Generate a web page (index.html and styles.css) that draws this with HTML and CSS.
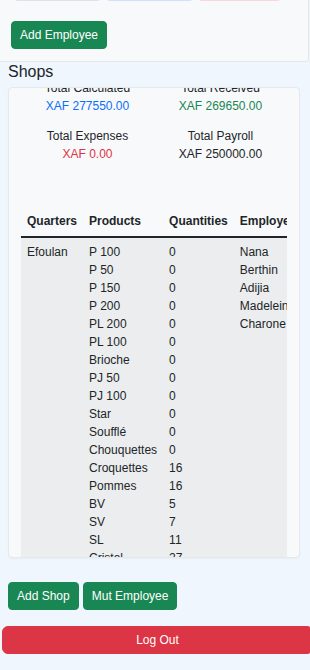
FILE: index.html
```html
<!DOCTYPE html>
<html lang="en">
<head>
<meta charset="utf-8">
<title>Dashboard</title>
<link rel="stylesheet" href="styles.css">
</head>
<body>
  <section class="top-panel">
    <div class="summary-row">
      <div class="summary summary-light"></div>
      <div class="summary summary-blue"></div>
      <div class="summary summary-red"></div>
    </div>
    <button class="btn btn-success btn-add-employee" type="button">Add Employee</button>
  </section>

  <h2 class="section-title">Shops</h2>

  <div class="shop-card">
    <div class="shop-body">
      <div class="stats">
        <div class="stat">
          <div class="stat-label">Total Calculated</div>
          <div class="stat-value text-primary">XAF 277550.00</div>
        </div>
        <div class="stat">
          <div class="stat-label">Total Received</div>
          <div class="stat-value text-success">XAF 269650.00</div>
        </div>
        <div class="stat">
          <div class="stat-label">Total Expenses</div>
          <div class="stat-value text-danger">XAF 0.00</div>
        </div>
        <div class="stat">
          <div class="stat-label">Total Payroll</div>
          <div class="stat-value">XAF 250000.00</div>
        </div>
      </div>

      <div class="table-wrap">
        <table class="shop-table">
          <thead>
            <tr>
              <th>Quarters</th>
              <th>Products</th>
              <th>Quantities</th>
              <th>Employees</th>
              <th>Actions</th>
            </tr>
          </thead>
          <tbody>
            <tr class="striped">
              <td>Efoulan</td>
              <td>
                <div>P 100</div><div>P 50</div><div>P 150</div><div>P 200</div>
                <div>PL 200</div><div>PL 100</div><div>Brioche</div><div>PJ 50</div>
                <div>PJ 100</div><div>Star</div><div>Soufflé</div><div>Chouquettes</div>
                <div>Croquettes</div><div>Pommes</div><div>BV</div><div>SV</div>
                <div>SL</div><div>Cristal</div><div>Cake</div><div>Pizza</div>
              </td>
              <td>
                <div>0</div><div>0</div><div>0</div><div>0</div>
                <div>0</div><div>0</div><div>0</div><div>0</div>
                <div>0</div><div>0</div><div>0</div><div>0</div>
                <div>16</div><div>16</div><div>5</div><div>7</div>
                <div>11</div><div>27</div><div>0</div><div>0</div>
              </td>
              <td>
                <div>Nana</div><div>Berthin</div><div>Adijia</div><div>Madeleine</div><div>Charone</div>
              </td>
              <td></td>
            </tr>
          </tbody>
        </table>
      </div>
    </div>
  </div>

  <div class="actions">
    <button class="btn btn-success" type="button">Add Shop</button>
    <button class="btn btn-success" type="button">Mut Employee</button>
  </div>

  <button class="btn btn-danger btn-logout" type="button">Log Out</button>
</body>
</html>
```

FILE: styles.css
```css
html, body {
  margin: 0;
  padding: 0;
}

body {
  background: #eff6fe;
  font-family: "Liberation Sans", Arial, sans-serif;
  font-size: 12px;
  line-height: 18px;
  color: #212529;
  overflow: hidden;
  width: 310px;
  height: 670px;
}

.top-panel {
  width: 309px;
  box-sizing: border-box;
  background: #f8f9fa;
  border-right: 1px solid #e4e7ea;
  border-bottom: 1px solid #e4e7ea;
  border-bottom-right-radius: 4px;
  padding: 0 0 12px 0;
}

.summary-row {
  display: flex;
  gap: 5px;
  padding-left: 14px;
  margin-top: -39px;
}

.summary {
  width: 87px;
  height: 40px;
  box-sizing: border-box;
  border-radius: 4px;
}

.summary-light { background: #dee2e6; width: 87px; }
.summary-blue { background: #cfe2ff; width: 87px; }
.summary-red { background: #f8d7da; width: 83px; }

.btn {
  font-family: "Liberation Sans", Arial, sans-serif;
  font-size: 12px;
  line-height: 18px;
  padding: 4px 8px;
  border: 1px solid transparent;
  border-radius: 4px;
  color: #fff;
  cursor: pointer;
  display: inline-block;
}

.btn-success {
  background: #198754;
  border-color: #198754;
}

.btn-danger {
  background: #dc3545;
  border-color: #dc3545;
}

.btn-add-employee {
  margin: 20px 0 0 11px;
}

.section-title {
  margin: 0 0 5px 8px;
  font-size: 16px;
  line-height: 20px;
  font-weight: 400;
  color: #212529;
}

.shop-card {
  margin: 0 10px 0 8px;
  height: 471px;
  box-sizing: border-box;
  background: #f8f9fa;
  border: 1px solid #e6e9ec;
  border-radius: 4px;
  box-shadow: 0 1px 2px rgba(0, 0, 0, 0.04);
  overflow: hidden;
  padding: 12px 12px 0 12px;
}

.shop-body {
  margin-top: -21px;
}

.stats {
  display: grid;
  grid-template-columns: 1fr 1fr;
  row-gap: 12px;
  text-align: center;
  margin-bottom: 43px;
}

.text-primary { color: #0d6efd; }
.text-success { color: #198754; }
.text-danger { color: #dc3545; }

.table-wrap {
  overflow: hidden;
}

.shop-table {
  border-collapse: collapse;
  white-space: nowrap;
  color: #212529;
}

.shop-table th {
  text-align: left;
  font-weight: 700;
  padding: 6px 6px;
  border-bottom: 2px solid #212529;
}

.shop-table td {
  vertical-align: top;
  padding: 5px 6px;
}

.shop-table td:last-child,
.shop-table th:last-child {
  padding-right: 40px;
}

.striped {
  background: #ecedee;
}

.actions {
  display: flex;
  gap: 4px;
  margin: 24px 0 0 8px;
}

.btn-logout {
  display: block;
  width: 311px;
  margin: 16px 0 0 2px;
  border-radius: 6px;
  text-align: center;
}
```
